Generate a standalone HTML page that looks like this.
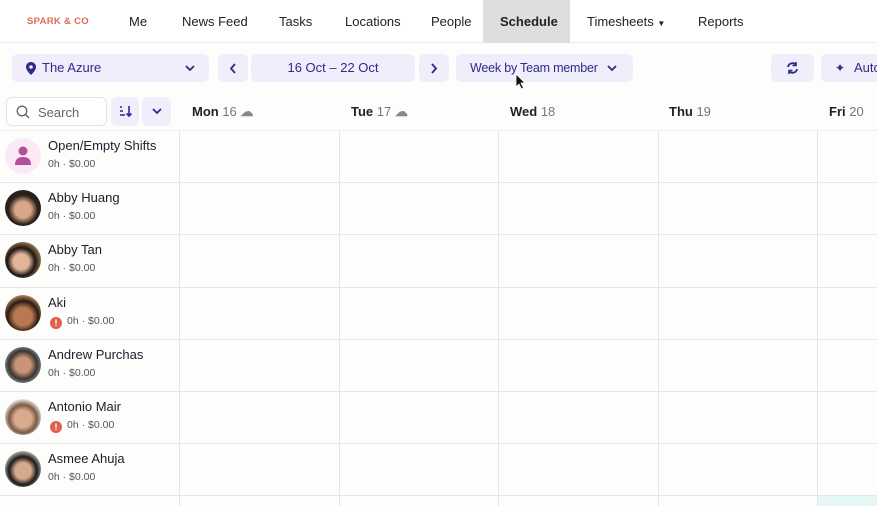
<!DOCTYPE html>
<html style="height:506px;overflow:hidden"><head><style>
*{box-sizing:border-box;margin:0;padding:0}
body{width:877px;height:506px;overflow:hidden;background:#fdfdfb;font-family:"Liberation Sans",sans-serif;position:relative;color:#1d1d2b}
.nav{position:absolute;top:0;left:0;width:877px;height:43px;background:#fff;border-bottom:1px solid #ececf0}
.nav span{position:absolute;top:14px;font-size:13px;color:#222}
.logo{color:#e06a55!important;font-size:9.5px!important;top:16px!important;letter-spacing:.3px;font-weight:bold}
.sched{position:absolute;left:483px;top:0;width:87px;height:43px;background:#dedede}
.btn{position:absolute;top:54px;height:28px;background:#efeefa;border-radius:6px;color:#2d2a8c;font-size:13px;line-height:28px}
.dh{position:absolute;top:104px;font-size:13px;font-weight:bold;color:#222}
.dh i{font-style:normal;font-weight:normal;color:#777}
.vl{position:absolute;top:130px;width:1px;height:376px;background:#e4e4ee}
.hl{position:absolute;left:0;width:877px;height:1px;background:#e6e6ee}
.row{position:absolute;left:0;width:179px;height:52px}
.av{position:absolute;left:5px;top:8px;width:36px;height:36px;border-radius:50%}
.nm{position:absolute;left:48px;top:8px;font-size:13px;color:#1d1d2b}
.sub{position:absolute;left:48px;top:28px;font-size:10.5px;color:#555}
.warn{display:inline-block;width:12px;height:12px;border-radius:50%;background:#e0604c;color:#fff;font-size:9px;text-align:center;line-height:12px;font-weight:bold;margin-right:5px;vertical-align:-2px}
</style></head><body>
<div class="nav">
<div class="sched"></div>
<span class="logo" style="left:27px">SPARK &amp; CO</span>
<span style="left:129px">Me</span>
<span style="left:182px">News Feed</span>
<span style="left:279px">Tasks</span>
<span style="left:345px">Locations</span>
<span style="left:431px">People</span>
<span style="left:500px;font-weight:bold">Schedule</span>
<span style="left:587px">Timesheets <small style="font-size:8px">▼</small></span>
<span style="left:698px">Reports</span>
</div>
<div class="btn" style="left:12px;width:197px"><svg style="position:absolute;left:14px;top:8px" width="10" height="13" viewBox="0 0 10 13"><path d="M5 0C2.2 0 0 2.2 0 5c0 3.5 5 8 5 8s5-4.5 5-8C10 2.2 7.8 0 5 0z" fill="#2d2a8c"/><circle cx="5" cy="5" r="1.8" fill="#efeefa"/></svg><span style="position:absolute;left:30px">The Azure</span><svg style="position:absolute;left:173px;top:11px" width="10" height="7"><path d="M1 1l4 4 4-4" stroke="#2d2a8c" stroke-width="1.8" fill="none"/></svg></div>
<div class="btn" style="left:218px;width:30px"><svg style="position:absolute;left:11px;top:9px" width="7" height="11"><path d="M6 1L2 5.5 6 10" stroke="#2d2a8c" stroke-width="1.8" fill="none"/></svg></div>
<div class="btn" style="left:251px;width:164px;text-align:center">16 Oct – 22 Oct</div>
<div class="btn" style="left:419px;width:30px"><svg style="position:absolute;left:12px;top:9px" width="7" height="11"><path d="M1 1l4 4.5L1 10" stroke="#2d2a8c" stroke-width="1.8" fill="none"/></svg></div>
<div class="btn" style="left:456px;width:177px"><span style="position:absolute;left:14px;font-size:12.5px;letter-spacing:-.2px">Week by Team member</span><svg style="position:absolute;left:151px;top:11px" width="10" height="7"><path d="M1 1l4 4 4-4" stroke="#2d2a8c" stroke-width="1.8" fill="none"/></svg></div>
<svg style="position:absolute;left:515px;top:73px" width="12" height="18"><path d="M1 1v13l3-3 2.5 5 2-1-2.5-5h4z" fill="#111" stroke="#fff" stroke-width=".8"/></svg>
<div class="btn" style="left:771px;width:43px"><svg style="position:absolute;left:15px;top:7px" width="13" height="14" viewBox="0 0 13 14"><path d="M2 6a4.5 4.5 0 018-2M11 8a4.5 4.5 0 01-8 2" stroke="#2d2a8c" stroke-width="1.8" fill="none"/><path d="M10 1v3.5H6.5M3 13V9.5h3.5" stroke="#2d2a8c" stroke-width="1.6" fill="none"/></svg></div>
<div class="btn" style="left:821px;width:70px"><span style="position:absolute;left:14px;font-size:12px">✦</span><span style="position:absolute;left:33px">Auto</span></div>
<div style="position:absolute;left:6px;top:97px;width:101px;height:29px;border:1px solid #e2e2ea;border-radius:6px;background:#fff"><svg style="position:absolute;left:9px;top:7px" width="14" height="14"><circle cx="6" cy="6" r="4.8" stroke="#666" stroke-width="1.3" fill="none"/><path d="M9.5 9.5l3.5 3.5" stroke="#666" stroke-width="1.3"/></svg><span style="position:absolute;left:31px;top:7px;font-size:13px;color:#666">Search</span></div>
<div class="btn" style="top:97px;left:111px;width:28px;height:29px"><svg style="position:absolute;left:8px;top:8px" width="13" height="13"><path d="M1 2h2M1 6h3M1 10h5M10 1v10M7.5 8.5L10 11l2.5-2.5" stroke="#2d2a8c" stroke-width="1.6" fill="none"/></svg></div>
<div class="btn" style="top:97px;left:142px;width:29px;height:29px"><svg style="position:absolute;left:10px;top:11px" width="10" height="7"><path d="M1 1l4 4 4-4" stroke="#2d2a8c" stroke-width="1.8" fill="none"/></svg></div>
<div class="dh" style="left:192px">Mon <i>16</i> <span style="color:#888">☁</span></div>
<div class="dh" style="left:351px">Tue <i>17</i> <span style="color:#888">☁</span></div>
<div class="dh" style="left:510px">Wed <i>18</i></div>
<div class="dh" style="left:669px">Thu <i>19</i></div>
<div class="dh" style="left:829px">Fri <i>20</i></div>
<div class="vl" style="left:179px"></div>
<div class="vl" style="left:339px"></div>
<div class="vl" style="left:498px"></div>
<div class="vl" style="left:658px"></div>
<div class="vl" style="left:817px"></div>
<div class="hl" style="top:130px;background:#eeeef2"></div>
<div class="hl" style="top:182px"></div><div class="hl" style="top:234px"></div><div class="hl" style="top:287px"></div><div class="hl" style="top:339px"></div><div class="hl" style="top:391px"></div><div class="hl" style="top:443px"></div><div class="hl" style="top:495px"></div>
<div style="position:absolute;left:818px;top:496px;width:59px;height:10px;background:#e6f8f6"></div>
<div class="row" style="top:130px"><div class="av" style="background:#fbeaf6"><svg style="position:absolute;left:9px;top:8px" width="18" height="20"><circle cx="9" cy="5" r="4.5" fill="#b34f9a"/><path d="M1 19c0-6 3-8 8-8s8 2 8 8z" fill="#b34f9a"/></svg></div><div class="nm">Open/Empty Shifts</div><div class="sub">0h · $0.00</div></div>
<div class="row" style="top:182px"><div class="av" style="background:radial-gradient(circle at 50% 55%,#d9a78a 30%,#2a1f1a 55%)"></div><div class="nm">Abby Huang</div><div class="sub">0h · $0.00</div></div>
<div class="row" style="top:234px"><div class="av" style="background:radial-gradient(circle at 45% 55%,#e2b59a 28%,#1e1612 50%,#a48458 75%)"></div><div class="nm">Abby Tan</div><div class="sub">0h · $0.00</div></div>
<div class="row" style="top:287px"><div class="av" style="background:radial-gradient(circle at 50% 60%,#b87850 32%,#2b1b12 55%,#c79a66 80%)"></div><div class="nm">Aki</div><div class="sub" style="left:50px"><span class="warn">!</span>0h · $0.00</div></div>
<div class="row" style="top:339px"><div class="av" style="background:radial-gradient(circle at 50% 50%,#c99478 30%,#3c3532 55%,#8c9aa6 80%)"></div><div class="nm">Andrew Purchas</div><div class="sub">0h · $0.00</div></div>
<div class="row" style="top:391px"><div class="av" style="background:radial-gradient(circle at 50% 55%,#d8ab8e 32%,#7a5a45 52%,#eeeeec 75%)"></div><div class="nm">Antonio Mair</div><div class="sub" style="left:50px"><span class="warn">!</span>0h · $0.00</div></div>
<div class="row" style="top:443px"><div class="av" style="background:radial-gradient(circle at 50% 55%,#d7a98c 30%,#1c1a18 52%,#dcdcd8 80%)"></div><div class="nm">Asmee Ahuja</div><div class="sub">0h · $0.00</div></div>
</body></html>
